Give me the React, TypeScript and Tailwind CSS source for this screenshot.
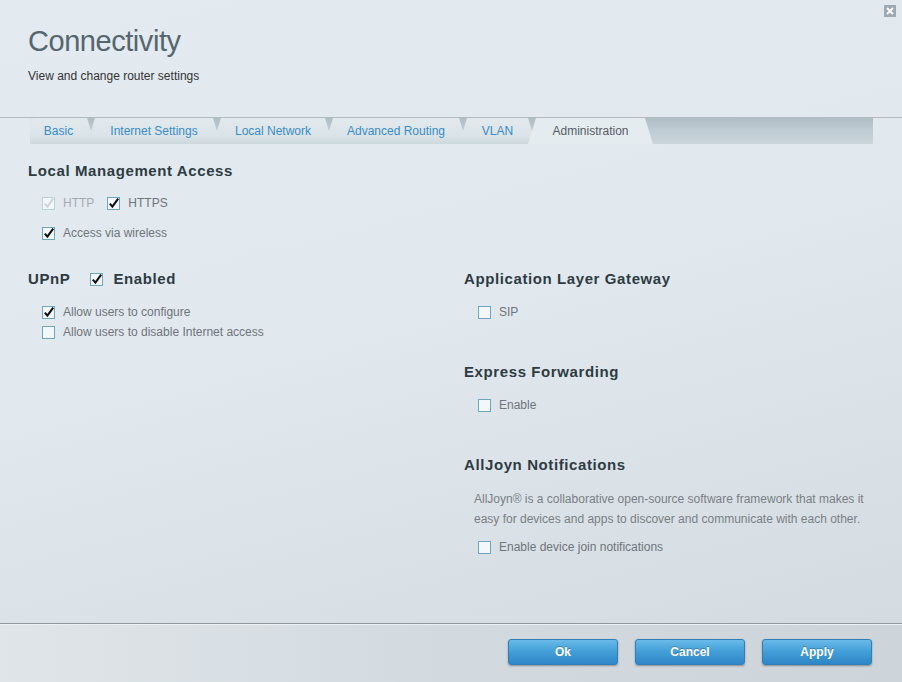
import React from 'react';

const Check = ({ checked = false, disabled = false }: { checked?: boolean; disabled?: boolean }) => (
    <svg width="13" height="14" viewBox="0 0 13 14" className="shrink-0 overflow-visible">
        <rect x="0.5" y="1.5" width="12" height="12" fill="#f3f7f9" stroke={disabled ? '#b9d2dc' : '#6ea6bf'} />
        {checked && (
            <path
                d="M2.8 7.6 L5.4 10.6 L11.2 2.6"
                fill="none"
                stroke={disabled ? '#cbd6db' : '#111'}
                strokeWidth="2.1"
            />
        )}
    </svg>
);

const Option = ({ label, checked, disabled }: { label: string; checked?: boolean; disabled?: boolean }) => (
    <label className="flex items-center gap-[8px] h-[16px]">
        <Check checked={checked} disabled={disabled} />
        <span className={`text-[12px] leading-[16px] ${disabled ? 'text-[#a3abb0]' : 'text-[#6d757a]'}`}>{label}</span>
    </label>
);

const Heading = ({ children }: { children: React.ReactNode }) => (
    <h3 className="text-[15px] leading-[18px] font-bold tracking-[0.6px] text-[#2e3b42]">{children}</h3>
);

const tabs = [
    { name: 'Basic', w: 'w-[65px]' },
    { name: 'Internet Settings', w: 'w-[134px]' },
    { name: 'Local Network', w: 'w-[120px]' },
    { name: 'Advanced Routing', w: 'w-[142px]' },
    { name: 'VLAN', w: 'w-[77px]' },
    { name: 'Administration', w: 'w-[125px]', active: true },
];

const FooterButton = ({ children }: { children: React.ReactNode }) => (
    <button className="w-[110px] h-[26px] rounded-[3px] border border-[#2f7fba] bg-[linear-gradient(180deg,#69bbe8_0%,#45a0d9_45%,#2e86c6_100%)] shadow-[0_1px_2px_rgba(0,0,0,0.35)] text-white text-[12px] font-bold [text-shadow:0_-1px_0_rgba(0,0,0,0.25)]">
        {children}
    </button>
);

export default function App() {
    return (
        <div className="w-[902px] h-[682px] relative overflow-hidden flex flex-col font-['Liberation_Sans',Arial,sans-serif] bg-[linear-gradient(165deg,#e3eaf0_0%,#e2e9ee_45%,#d3dadf_100%)]">
            {/* close */}
            <button className="absolute right-[6px] top-[5px] w-[12px] h-[12px] bg-[#9ea9b1] flex items-center justify-center">
                <svg width="8" height="8" viewBox="0 0 8 8">
                    <path d="M1 1 L7 7 M7 1 L1 7" stroke="#fff" strokeWidth="1.8" />
                </svg>
            </button>

            {/* header */}
            <header className="h-[117px] shrink-0 px-[28px] pt-[24px]">
                <h1 className="text-[29px] leading-[34px] tracking-[-0.45px] text-[#56656e]">Connectivity</h1>
                <p className="mt-[11px] text-[12px] leading-[14px] text-[#333]">View and change router settings</p>
            </header>

            {/* tabs */}
            <div className="border-t border-[#b3bbc1] shrink-0">
                <div className="ml-[30px] w-[843px] h-[26px] flex rounded-tl-[4px] bg-[linear-gradient(180deg,#afbdc5_0%,#bfccd3_50%,#cbd6db_100%)]">
                    {tabs.map((t, i) => (
                        <div
                            key={t.name}
                            className={`${t.w} h-full flex items-center justify-center pb-[1px] text-[12px] ${
                                i === 0
                                    ? 'pr-[8px] rounded-tl-[4px] [clip-path:polygon(0_0,calc(100%-8px)_0,100%_100%,0_100%)]'
                                    : '-ml-[8px] [clip-path:polygon(0_100%,8px_0,calc(100%-8px)_0,100%_100%)]'
                            } ${
                                t.active
                                    ? 'relative z-10 bg-[#e5ecf0] text-[#555d62]'
                                    : 'bg-[linear-gradient(180deg,#e3eaee_0%,#dae3e7_70%,#cdd8dd_100%)] text-[#3a8cc6]'
                            }`}
                        >
                            {t.name}
                        </div>
                    ))}
                </div>
            </div>

            {/* content */}
            <main className="flex-1 px-[28px] pt-[18px]">
                <section>
                    <Heading>Local Management Access</Heading>
                    <div className="mt-[15px] ml-[14px] flex items-center gap-[13px]">
                        <Option label="HTTP" checked disabled />
                        <Option label="HTTPS" checked />
                    </div>
                    <div className="mt-[14px] ml-[14px]">
                        <Option label="Access via wireless" checked />
                    </div>
                </section>

                <div className="mt-[29px] grid grid-cols-[436px_1fr]">
                    <section>
                        <div className="flex items-center">
                            <Heading>UPnP</Heading>
                            <div className="ml-[20px] flex items-center gap-[10px]">
                                <Check checked />
                                <Heading>Enabled</Heading>
                            </div>
                        </div>
                        <div className="mt-[16px] ml-[14px] flex flex-col gap-[4px]">
                            <Option label="Allow users to configure" checked />
                            <Option label="Allow users to disable Internet access" />
                        </div>
                    </section>

                    <section className="flex flex-col">
                        <Heading>Application Layer Gateway</Heading>
                        <div className="mt-[16px] ml-[14px]">
                            <Option label="SIP" />
                        </div>

                        <div className="mt-[43px]">
                            <Heading>Express Forwarding</Heading>
                        </div>
                        <div className="mt-[16px] ml-[14px]">
                            <Option label="Enable" />
                        </div>

                        <div className="mt-[43px]">
                            <Heading>AllJoyn Notifications</Heading>
                        </div>
                        <p className="mt-[15px] ml-[10px] text-[12px] leading-[20px] text-[#787f84]">
                            AllJoyn® is a collaborative open-source software framework that makes it easy for devices and apps to discover and communicate with each other.
                        </p>
                        <div className="mt-[10px] ml-[14px]">
                            <Option label="Enable device join notifications" />
                        </div>
                    </section>
                </div>
            </main>

            {/* footer */}
            <footer className="h-[59px] shrink-0 border-t border-[#8f989e] bg-[linear-gradient(90deg,#dfe5e9_0%,#d3dadf_50%,#cdd4da_100%)]">
                <div className="border-t border-[#eef2f4] h-full flex items-start justify-end gap-[17px] pr-[30px] pt-[14px]">
                    <FooterButton>Ok</FooterButton>
                    <FooterButton>Cancel</FooterButton>
                    <FooterButton>Apply</FooterButton>
                </div>
            </footer>
        </div>
    );
}
